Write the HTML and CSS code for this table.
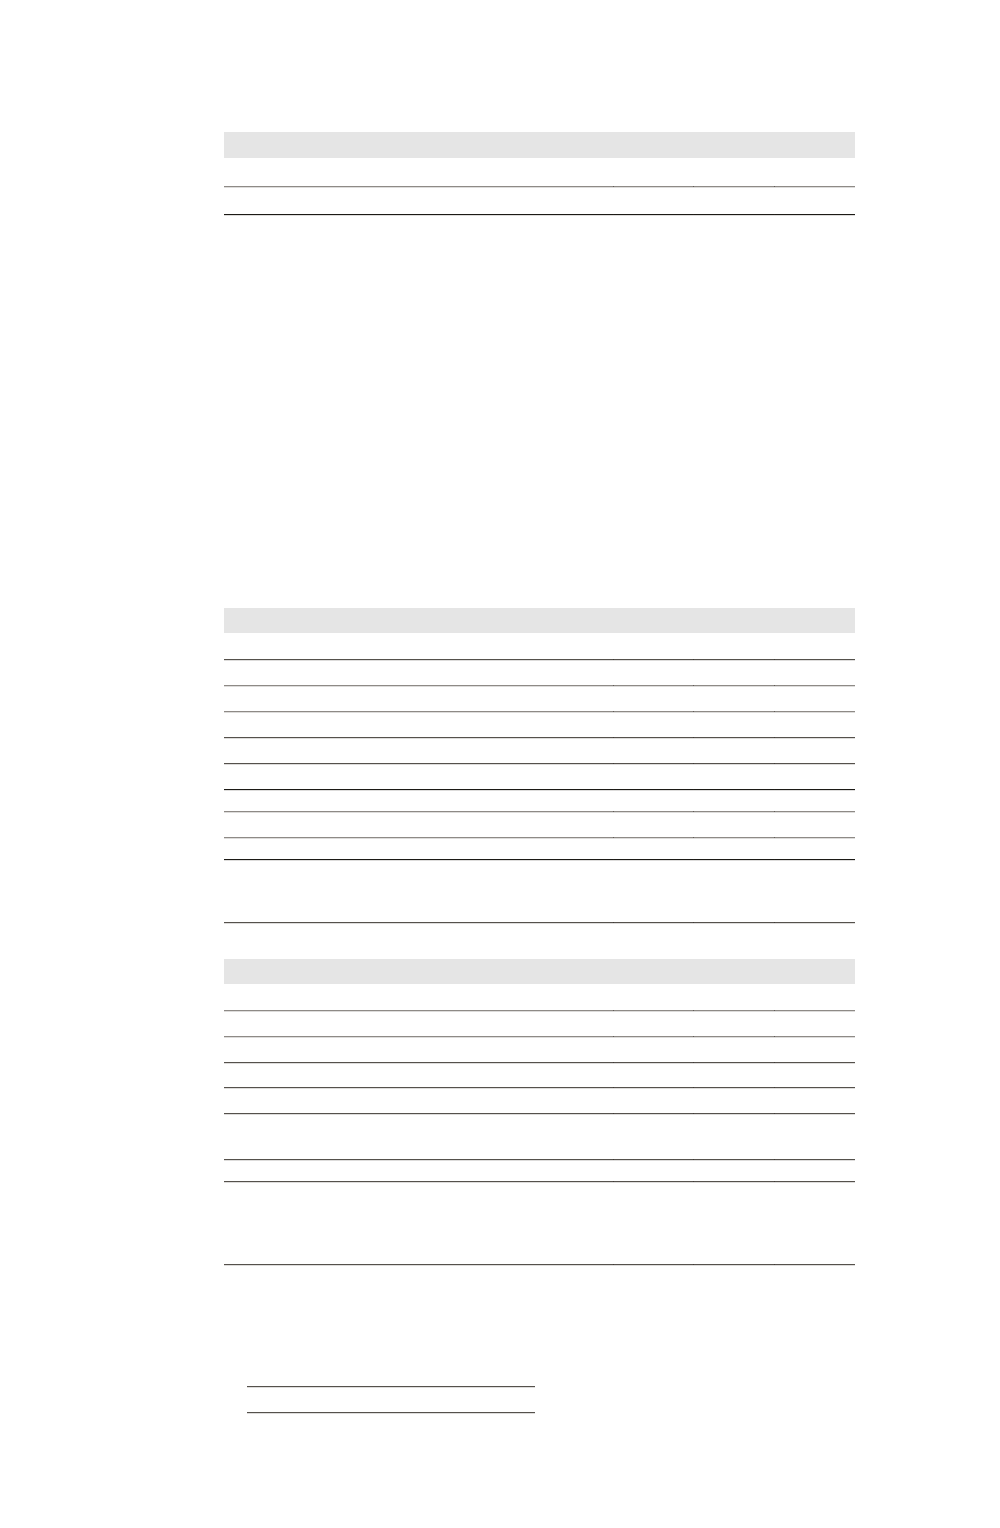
FILE: index.html
```html
<!DOCTYPE html>
<html lang="en">
<head>
<meta charset="utf-8">
<title>Report</title>
<link rel="stylesheet" href="styles.css">
</head>
<body>
<main class="page">
  <section class="tbl t1">
    <div class="hd h26"></div>
    <div class="r g h29"><span></span><span></span><span></span><span></span></div>
    <div class="r k h28"><span></span><span></span><span></span><span></span></div>
  </section>

  <section class="tbl t2">
    <div class="hd h25"></div>
    <div class="r d h27"><span></span><span></span><span></span><span></span></div>
    <div class="r g h26"><span></span><span></span><span></span><span></span></div>
    <div class="r g h26"><span></span><span></span><span></span><span></span></div>
    <div class="r d h26"><span></span><span></span><span></span><span></span></div>
    <div class="r d h26"><span></span><span></span><span></span><span></span></div>
    <div class="r k h26"><span></span><span></span><span></span><span></span></div>
    <div class="r g h22"><span></span><span></span><span></span><span></span></div>
    <div class="r g h26"><span></span><span></span><span></span><span></span></div>
    <div class="r k h22"><span></span><span></span><span></span><span></span></div>
    <div class="r d h63"><span></span><span></span><span></span><span></span></div>
  </section>

  <section class="tbl t3">
    <div class="hd h25"></div>
    <div class="r g h27"><span></span><span></span><span></span><span></span></div>
    <div class="r g h26"><span></span><span></span><span></span><span></span></div>
    <div class="r d h26"><span></span><span></span><span></span><span></span></div>
    <div class="r d h25"><span></span><span></span><span></span><span></span></div>
    <div class="r d h26"><span></span><span></span><span></span><span></span></div>
    <div class="r d h46"><span></span><span></span><span></span><span></span></div>
    <div class="r d h22"><span></span><span></span><span></span><span></span></div>
    <div class="r d h83"><span></span><span></span><span></span><span></span></div>
  </section>

  <section class="sign">
    <div class="sl d h27"></div>
    <div class="sl d h26"></div>
  </section>
</main>
</body>
</html>
```

FILE: styles.css
```css
html, body {
  margin: 0;
  padding: 0;
  background: #ffffff;
  font-family: "Liberation Sans", Arial, sans-serif;
}

.page {
  width: 631px;
  padding-left: 224px;
  padding-top: 132px;
  padding-bottom: 100px;
}

.tbl {
  display: flex;
  flex-direction: column;
  width: 631px;
}

.t2 { margin-top: 393px; }
.t3 { margin-top: 36px; }

.hd {
  background: #e5e5e5;
}

.r {
  box-sizing: border-box;
  display: grid;
  grid-template-columns: 389px 80px 81px 81px;
  border-bottom: 1px solid #8e8a86;
  box-shadow: 0 1px 0 rgba(120, 116, 110, 0.25);
}

.r span {
  display: block;
  position: relative;
}

.r span + span::before {
  content: "";
  position: absolute;
  left: 0;
  bottom: -1px;
  width: 1px;
  height: 1px;
  background: rgba(40, 36, 32, 0.45);
}

.g { border-bottom-color: #8e8a86; }
.d { border-bottom-color: #55514c; }
.k { border-bottom-color: #1c1a16; }

.sign {
  margin-top: 95px;
  margin-left: 23px;
  width: 288px;
  display: flex;
  flex-direction: column;
}

.sl {
  box-sizing: border-box;
  border-bottom: 1px solid #55514c;
  box-shadow: 0 1px 0 rgba(120, 116, 110, 0.25);
}

.h22 { height: 22px; }
.h25 { height: 25px; }
.h26 { height: 26px; }
.h27 { height: 27px; }
.h28 { height: 28px; }
.h29 { height: 29px; }
.h46 { height: 46px; }
.h63 { height: 63px; }
.h83 { height: 83px; }
```
